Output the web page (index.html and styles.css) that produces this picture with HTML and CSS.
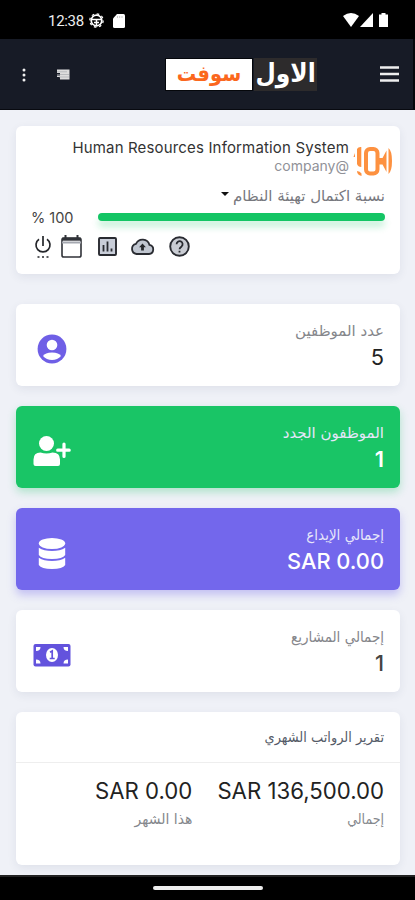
FILE: index.html
```html
<!DOCTYPE html>
<html lang="ar">
<head>
<meta charset="utf-8">
<meta name="viewport" content="width=device-width, initial-scale=1">
<title>Human Resources Information System</title>
<link rel="stylesheet" href="styles.css">
</head>
<body>
<div class="screen">
  <div class="status">
    <div class="status-left">
      <span class="clock">12:38</span>
      <svg width="15" height="15" viewBox="0 0 15 15" fill="none" stroke="#fff"><circle cx="7.5" cy="7.5" r="5.3" stroke-width="1.7"/><circle cx="7.5" cy="7.5" r="6.7" stroke-width="1.2" stroke-dasharray="2.6 2.66"/><path d="M3 6.6h9M7.5 7v5M5 9.5h5" stroke-width="1.5"/></svg>
      <svg width="12" height="14" viewBox="0 0 12 14"><path d="M4 0h6.5Q12 0 12 1.500v11Q12 14 10.500 14h-9Q0 14 0 12.500V4.500z" fill="#fff"/><path d="M4.500 2v2M6.700 2v2M9 2v2" stroke="#bbb" stroke-width=".8"/></svg>
    </div>
    <div class="status-right">
      <svg width="16" height="14" viewBox="0 0 16 14"><path d="M0 3Q8-3 16 3L8 14z" fill="#fff"/></svg>
      <svg width="13" height="14" viewBox="0 0 13 14"><path d="M13 0v14H0z" fill="#fff"/></svg>
      <svg class="battery" width="9" height="14" viewBox="0 0 9 14"><path d="M2.500 0h4v1.500H9V14H0V1.500h2.500z" fill="#fff"/></svg>
    </div>
  </div>
  <header class="navbar">
    <div class="nav-left">
      <svg width="4" height="14" viewBox="0 0 4 14" fill="#f0f0f0"><circle cx="2" cy="2" r="1.500"/><circle cx="2" cy="7" r="1.500"/><circle cx="2" cy="12" r="1.500"/></svg>
      <svg width="14" height="11" viewBox="0 0 14 11"><path d="M1 .5h12.500v10H4V8H1V6.500h3V4H1z" fill="#ddd"/><path d="M1 2.800h10M1 5.500h12M3 8h10" stroke="#a0a3a8" stroke-width=".6"/></svg>
    </div>
    <div class="brand">
      <span class="brand-soft" dir="rtl">سوفت</span>
      <span class="brand-first" dir="rtl">الاول</span>
    </div>
    <svg class="menu" width="19" height="16" viewBox="0 0 19 16"><path d="M0 1.500h19M0 8h19M0 14.500h19" stroke="#eee" stroke-width="2.400"/></svg>
  </header>
  <main class="content">
    <section class="card company">
      <div class="company-head">
        <div class="company-text">
          <div class="company-name">Human Resources Information System</div>
          <div class="company-handle">company@</div>
        </div>
        <svg class="company-logo" width="40" height="31" viewBox="0 0 40 31" fill="#fd9140"><rect x="13" y="3" width="11.500" height="24.500" rx="4" fill="none" stroke="#fd9140" stroke-width="4"/><path d="M4 3Q5.500.500 8.300 1v20Q5 21 4 18zM.500 11l1.500-4v4zM4 25q3 0 4.500 2.500V30Q4 29 4 25zM26 12h3.500l4-7.500v21.500l-4-7.500H26zM35.500 2q3.500 3 3.500 13t-3.500 13z"/></svg>
      </div>
      <div class="setup"><span class="caret"></span><span class="wide" dir="rtl">نسبة اكتمال تهيئة النظام</span></div>
      <div class="progress-row"><span class="percent">% 100</span><div class="progress"></div></div>
      <div class="tools">
        <svg width="18" height="24" viewBox="0 0 18 24" fill="none" stroke="#25272b" stroke-width="1.700"><path d="M9 1v10M5 4.200a7 7 0 1 0 8 0"/><path d="M3.500 22h2M8 22h2M12.500 22h2"/></svg>
        <svg class="tool-calendar" width="21" height="23" viewBox="0 0 21 23" fill="none" stroke="#303238"><rect x="1" y="3" width="19" height="19" rx="1.800" stroke-width="1.600"/><path d="M1 4.200h19" stroke-width="3"/><path d="M1 7.500h19" stroke="#a5a8b0" stroke-width="2"/><path d="M4.500 0v4M16.500 0v4" stroke-width="2"/></svg>
        <svg class="tool-chart" width="19" height="19" viewBox="0 0 19 19"><rect x="1" y="1" width="17" height="17" rx="1" fill="#c9ced9" stroke="#292b31" stroke-width="1.900"/><path d="M5.500 8v6.500M9.500 4.500v10M13.500 11.500v3" stroke="#292b31" stroke-width="1.800"/></svg>
        <svg class="tool-cloud" width="25" height="17" viewBox="0 0 25 17"><path d="M6.500 16h12.500a4.600 4.600 0 0 0 .5-9.100A7.200 7.200 0 0 0 6 5.800 5.200 5.200 0 0 0 6.500 16z" fill="#c0c6d0" stroke="#292b31" stroke-width="1.800"/><path d="M12.500 5.500l3.400 3.800h-2V12.500h-2.800V9.300h-2z" fill="#25272b"/></svg>
        <svg class="tool-help" width="21" height="21" viewBox="0 0 21 21" fill="none"><circle cx="10.500" cy="10.500" r="9.300" fill="#c9ccd3" stroke="#292b31" stroke-width="1.900"/><path d="M7.600 8.300a3 3 0 1 1 5 2.100q-2.100 1.500-2.100 2.800M10.500 14.700v1.900" stroke="#292b31" stroke-width="1.800"/></svg>
      </div>
    </section>

    <section class="card stat">
      <svg width="38" height="30" viewBox="0 0 38 30"><circle cx="19" cy="15" r="14.400" fill="#6f5fe6"/><circle cx="19" cy="11" r="5.300" fill="#fff"/><path d="M10 22q2-3.500 9-3.500t9 3.500q-3.500 4-9 4t-9-4z" fill="#fff"/></svg>
      <div class="stat-text"><div class="label wide" dir="rtl">عدد الموظفين</div><div class="value">5</div></div>
    </section>
    <section class="card stat green">
      <svg width="38" height="30" viewBox="0 0 38 30" fill="#fff"><circle cx="13.500" cy="7.500" r="7.500"/><path d="M.500 28v-4.500q0-7 7-7 6 2 12 0 7.500 0 7.500 7V28q0 2-2 2h-22.500q-2 0-2-2z"/><path d="M31 8v12.500M24.700 14.200h11.500" stroke="#fff" stroke-width="3.200" stroke-linecap="round"/></svg>
      <div class="stat-text"><div class="label wide" dir="rtl">الموظفون الجدد</div><div class="value">1</div></div>
    </section>
    <section class="card stat purple">
      <svg width="38" height="31" viewBox="0 0 38 31" fill="#fff"><ellipse cx="19" cy="5.500" rx="13.200" ry="5.500"/><path d="M5.800 9.800q5 3.200 13.200 3.200t13.200-3.200V17q-2.500 4-13.200 4T5.800 17zM5.800 19.800q5 3.200 13.200 3.200t13.200-3.200V27q-2.500 4-13.200 4T5.800 27z"/></svg>
      <div class="stat-text"><div class="label" dir="rtl">إجمالي الإيداع</div><div class="value">SAR 0.00</div></div>
    </section>
    <section class="card stat projects">
      <svg width="38" height="24" viewBox="0 0 38 24"><rect x=".5" y="1" width="37" height="22.500" rx="2" fill="#6353dd"/><ellipse cx="19" cy="12" rx="6" ry="7" fill="#fff"/><path d="M17 9.200l2.200-1.200v7M16.700 15.500h5" stroke="#6353dd" stroke-width="1.700" fill="none"/><path d="M3 4h4.500q0 4-4.500 4zM35 4h-4.500q0 4 4.500 4zM3 20.500h4.500q0-4-4.500-4zM35 20.500h-4.500q0-4 4.500-4z" fill="#fff"/></svg>
      <div class="stat-text"><div class="label" dir="rtl">إجمالي المشاريع</div><div class="value">1</div></div>
    </section>

    <section class="card report">
      <h2 class="report-title" dir="rtl">تقرير الرواتب الشهري</h2>
      <div class="report-body">
        <div class="amount"><div class="value">SAR 0.00</div><div class="caption wide" dir="rtl">هذا الشهر</div></div>
        <div class="amount"><div class="value">SAR 136,500.00</div><div class="caption" dir="rtl">إجمالي</div></div>
      </div>
    </section>
  </main>
  <div class="home"><div class="home-bar"></div></div>
</div>
</body>
</html>
```
FILE: styles.css
```css
* { box-sizing: border-box; }
body { margin: 0; background: #eff1f7; font-family: Inter, "DejaVu Sans", sans-serif; color: #222; }
svg { display: block; flex: none; }
[dir="rtl"] { font-family: "DejaVu Sans", sans-serif; font-stretch: condensed; white-space: nowrap; }
[dir="rtl"].wide { font-stretch: normal; }
.screen { width: 415px; height: 900px; display: flex; flex-direction: column; overflow: hidden; }
.status { height: 39px; flex: none; background: #000; display: flex; justify-content: space-between; padding: 0 27px 0 48px; align-items: center; }
.status-left, .status-right { display: flex; align-items: center; }
.status-left { gap: 6px; padding-top: 2px; }
.status-left svg + svg { margin-left: 3px; }
.clock { color: #eee; font: 400 15px/20px Roboto, sans-serif; letter-spacing: -.3px; width: 35px; }
.status-right { gap: 1px; }
.battery { margin-left: 5px; }
.navbar { height: 71px; flex: none; background: #171b26; border-bottom: 1px solid #080a10; border-right: 2px solid #05070b; display: flex; align-items: center; justify-content: space-between; padding: 0 14px 0 22px; }
.nav-left { display: flex; gap: 30px; align-items: center; width: 62px; padding-top: 1px; }
.brand { display: flex; height: 33px; gap: 1px; margin-left: 81px; margin-right: auto; padding-top: 0; }
.brand-soft, .brand-first { display: flex; align-items: center; justify-content: center; font-weight: 700; }
.brand-soft { width: 88px; background: #fff; color: #fb671d; font-size: 21.500px; border: 1px solid #05070b; padding-bottom: 2px; }
.brand-first { width: 63px; background: #2d2b2c; color: #fff; font-size: 26px; padding-bottom: 2px; }
.menu { margin-top: -1px; }
.content { flex: 1; padding: 15.500px 15px 0 16px; min-height: 0; }
.card { background: #fff; border-radius: 6px; box-shadow: 0 3px 10px rgba(40, 50, 90, .08); margin-bottom: 20.500px; }
.company { height: 148.500px; margin-bottom: 30px; padding: 13.500px 15px 0 17px; }
.company-head { display: flex; justify-content: flex-end; gap: 4px; margin-right: -8px; height: 44px; }
.company-text { text-align: right; }
.company-name { font-size: 15px; line-height: 18px; letter-spacing: .16px; color: #333; white-space: nowrap; }
.company-handle { font-size: 14px; line-height: 17px; color: #909198; }
.company-logo { margin-top: 7px; }
.setup { display: flex; justify-content: flex-end; gap: 4px; height: 26px; align-items: center; color: #77787e; font-size: 15px; }
.caret { border: 4.500px solid transparent; border-top-color: #111; border-bottom: 0; margin-top: -4px; }
.progress-row { display: flex; align-items: center; height: 16px; }
.percent { width: 67px; margin-left: -2px; font-size: 14.500px; color: #444; white-space: nowrap; }
.progress { flex: 1; height: 8px; border-radius: 4px; background: #13c564; box-shadow: 0 6px 7px rgba(19, 197, 100, .24); }
.tools { display: flex; align-items: center; margin-top: 8.500px; height: 26px; }
.tools svg:first-child { margin-left: 1px; }
.tool-calendar { margin-left: 9px; }
.tool-chart { margin-left: 16px; }
.tool-cloud { margin-left: 13px; }
.tool-help { margin-left: 14px; }
.stat { height: 81.500px; display: flex; align-items: center; justify-content: space-between; padding: 9px 16px 0 17px; }
.stat-text { text-align: right; margin-top: -9px; }
.label { font-size: 15px; line-height: 24px; color: #85868b; }
.value { font-size: 21.800px; line-height: 28px; color: #222; }
.green { background: #19c566; box-shadow: 0 4px 9px rgba(25, 197, 102, .3); }
.purple { background: #7367ec; box-shadow: 0 5px 9px rgba(115, 103, 236, .35); }
.green .label, .purple .label { color: #e6e6fa; }
.green .value, .purple .value { color: #fff; }
.green .value { font-weight: 600; }
.purple .value { font-weight: 500; }
.projects .value { font-weight: 500; color: #444; }
.report { height: 153px; margin-bottom: 0; }
.report-title { margin: 0; height: 51px; border-bottom: 1px solid #eee; padding: 0 16px; font-size: 14.400px; font-weight: 400; line-height: 50px; color: #555b68; }
.report-body { display: flex; justify-content: flex-end; gap: 25px; padding: 14px 16px 0; }
.report .value { font-size: 22.200px; }
.amount { text-align: right; }
.caption { font-size: 14px; line-height: 24px; margin-top: 2px; color: #85888d; text-align: right; }
.home { height: 25px; flex: none; background: #000; border-top: 2px solid #222; display: flex; justify-content: center; padding-top: 9px; }
.home-bar { width: 110px; height: 4px; border-radius: 2px; background: #eee; }
```
